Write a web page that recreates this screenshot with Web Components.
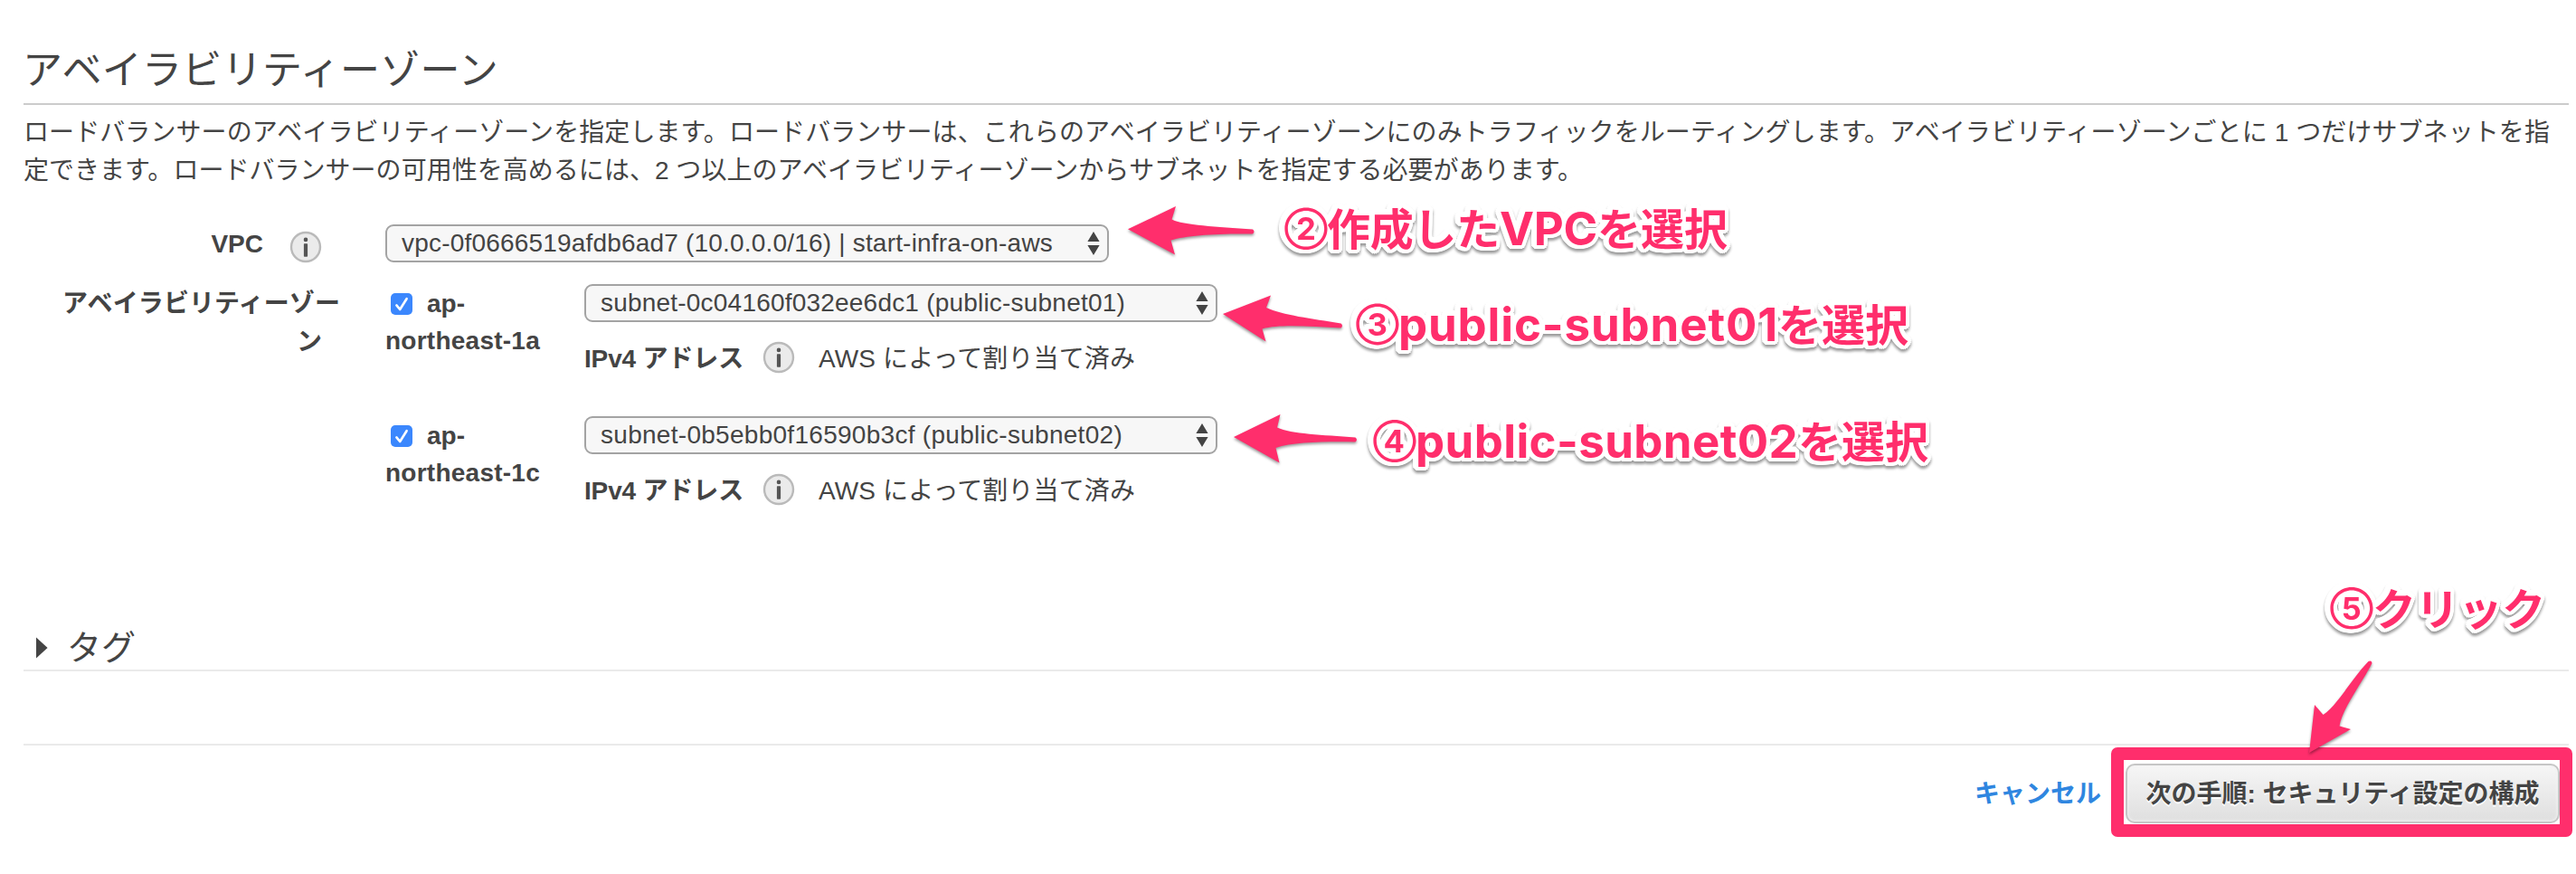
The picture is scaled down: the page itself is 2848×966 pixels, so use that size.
<!DOCTYPE html>
<html lang="ja">
<head>
<meta charset="utf-8">
<title>アベイラビリティーゾーン</title>
<style>
html,body{margin:0;padding:0;background:#fff}
body{width:2848px;height:966px;overflow:hidden;position:relative;color:#444;font:28px/42px "Liberation Sans","Noto Sans CJK JP",sans-serif}
</style>
</head>
<body>
<lb-page></lb-page>
<script>
const define=(name,html,setup)=>{
  const t=document.createElement('template');t.innerHTML=html;
  customElements.define(name,class extends HTMLElement{
    connectedCallback(){
      if(this.shadowRoot)return;
      this.attachShadow({mode:'open'}).append(t.content.cloneNode(true));
      if(setup)setup(this,this.shadowRoot);
    }
  });
};

/* single line of text whose tracking is adjusted to a given advance width */
define('fit-text',`<style>:host{display:block;white-space:nowrap}span{display:inline-block;white-space:pre}</style><span></span>`,
(el,r)=>{
  const s=r.querySelector('span');s.textContent=el.getAttribute('text');
  const w=+el.getAttribute('w');
  if(w)s.style.letterSpacing=((w-s.getBoundingClientRect().width)/[...s.textContent].length)+'px';
});

define('info-icon',`<style>:host{display:block;width:36px;height:36px}svg{display:block}</style>
<svg width="36" height="36" viewBox="0 0 36 36"><circle cx="18" cy="18" r="16" fill="#ebebeb" stroke="#bababa" stroke-width="2.4"/><circle cx="18" cy="9.9" r="2.3" fill="#555"/><rect x="15.9" y="14.3" width="4.2" height="14.4" rx=".8" fill="#555"/></svg>`);

define('check-box',`<style>:host{display:block;width:24px;height:24px}svg{display:block}</style>
<svg width="24" height="24" viewBox="0 0 24 24"><rect width="24" height="24" rx="5" fill="#3b87fd"/><path d="M6.4 13.4l3.8 4.600 7.400-11.800" fill="none" stroke="#fff" stroke-width="2.6" stroke-linecap="round" stroke-linejoin="round"/></svg>`);

define('section-title',`<style>:host{display:block;border-bottom:2px solid #ccc;padding-bottom:6px;font-size:44px;line-height:60px}fit-text{margin-left:-1px}</style><fit-text text="アベイラビリティーゾーン" w="526"></fit-text>`);

define('tag-section',`<style>:host{display:flex;border-bottom:2px solid #eaeaea;font-size:38px;line-height:53px;height:50px;padding-left:14px}svg{display:block;margin:14px 21px 0 0}</style>
<svg width="13" height="24" viewBox="0 0 13 24"><path d="M0 .5L12.6 12 0 23.5z" fill="#444"/></svg><slot></slot>`);

define('zone-row',`<style>:host{display:grid;grid-template-columns:220px 700px;height:146px}
.name{font-weight:700;line-height:42px}
.l1{display:flex;align-items:center;height:42px;padding-left:6px;gap:16px;padding-top:1px}
.l2{margin-top:-1px}
.ip{display:flex;height:36px;margin-top:21px}
.ip b{line-height:40px}
info-icon{margin:0 26px 0 21px}.t{margin-top:-1px}</style>
<div class="name"><div class="l1"><check-box></check-box><span>ap-</span></div><div class="l2"></div></div>
<div><div class="s"></div><div class="ip"><b><fit-text text="IPv4 アドレス" w="176"></fit-text></b><info-icon></info-icon><fit-text class="t" text="AWS によって割り当て済み" w="350"></fit-text></div></div>`,
(el,r)=>{
  r.querySelector('.l2').innerHTML=`<fit-text text="${el.getAttribute('zone')}" w="171"></fit-text>`;
  r.querySelector('.s').innerHTML=`<pick-list text="${el.getAttribute('subnet')}" w="${el.getAttribute('w')}"></pick-list>`;
});

define('pick-list',`<style>:host{display:flex;box-sizing:border-box;height:42px;border:2px solid #a3a3a3;border-radius:9px;background:#f7f7f7;padding:0 8px 0 16px;justify-content:space-between;align-items:center;line-height:36px}svg{display:block}.v{margin-top:-1px}</style>
<div class="v"></div><svg width="14" height="28" viewBox="0 0 14 28"><path d="M7 1l6.6 11H.4zM7 27L.4 16h13.2z" fill="#444"/></svg>`,
(el,r)=>{r.querySelector('.v').innerHTML=`<fit-text text="${el.getAttribute('text')}" w="${el.getAttribute('w')}"></fit-text>`});

define('next-button',`<style>:host{display:flex;box-sizing:border-box;width:480px;height:66px;border:2px solid #c6c6c6;border-radius:10px;background:linear-gradient(#f6f6f6,#dfdfdf);box-shadow:inset 0 0 3px 1px #f2f2f2;font-weight:700;justify-content:center;line-height:64px;text-shadow:0 2px 0 #fff}</style>
<fit-text text="次の手順: セキュリティ設定の構成" w="435"></fit-text>`);

/* pink caption with a rounded white outline and a soft shadow around the whole line */
define('callout-note',`<style>:host{position:absolute;display:block;font:700 48px/60px "Noto Sans CJK JP",sans-serif;color:#ff2e6c}
div{display:flex;filter:drop-shadow(1.5px 1.5px 0 #fff) drop-shadow(-1.5px -1.5px 0 #fff) drop-shadow(1.5px -1.5px 0 #fff) drop-shadow(-1.5px 1.5px 0 #fff) drop-shadow(2px 0 0 #fff) drop-shadow(-2px 0 0 #fff) drop-shadow(0 2px 0 #fff) drop-shadow(0 -2px 0 #fff) drop-shadow(0 3px 1.500px rgba(0,0,0,.4))}
.ja{margin-top:-3px}.en{font-family:Inter,sans-serif;font-size:51px}.num{font-family:Inter,sans-serif;font-size:34.5px;width:47px;padding-left:2px}</style><div></div>`,
(el,r)=>{
  r.querySelector('div').innerHTML=el.getAttribute('parts').split('|').map(p=>{
    const[t,w]=p.split('~');
    const c=/^[②-⑤]/.test(t)?'num':/^[a-zA-Z]/.test(t)?'en':'ja';
    return `<fit-text class="${c}" text="${t}"${w?` w="${w}"`:''}></fit-text>`;
  }).join('');
});

define('callout-layer',`<style>:host{position:absolute;inset:0;display:block}
svg{position:absolute;inset:0;filter:drop-shadow(0 2px 1.5px rgba(0,0,0,.4))}
.frame{position:absolute;left:2334px;top:826px;width:510px;height:99px;box-sizing:border-box;border:14px solid #ff2e6c;border-radius:7px}
.n2{left:1418px;top:223px}.n3{left:1497px;top:329px}.n4{left:1516px;top:458px}.n5{left:2574px;top:643px}</style>
<div class="frame"></div>
<svg width="2848" height="966" viewBox="0 0 2848 966" fill="#ff2e6c">
<path d="M1247 253.3L1300 228l-4.500 14.500C1308 249 1345 250.500 1385 253.500q3 2.500 0 5C1345 258 1312 260 1294.500 265.500L1299 281.500z"/>
<path d="M1352 347l53-20.500-5 13.500C1418 348.500 1450 352 1482.500 357.500q3 2.500 0 5C1450 361 1415 358 1395.500 363.500L1399.500 377.500z"/>
<path d="M1364 483l51.500-25-3.500 14.500C1428 480 1462 480.500 1498.500 483.500q3 2.500 0 5C1465 488 1430 488.500 1410.500 495L1414.500 511.500z"/>
<path d="M2553 832L2559 779l9.500 11C2584 780 2600 750 2618.500 731q3.500-1.500 4 2C2612 754 2589 784 2586.500 802.500L2599 806z"/>
</svg>
<callout-note class="n2" parts="②|作成した~191|VPC~108|を選択~144"></callout-note>
<callout-note class="n3" parts="③|public-subnet01~420|を選択~144"></callout-note>
<callout-note class="n4" parts="④|public-subnet02~423|を選択~144"></callout-note>
<callout-note class="n5" parts="⑤|クリック~191"></callout-note>`);

define('lb-page',`<style>:host{display:flex;flex-direction:column;box-sizing:border-box;width:2848px;height:966px;padding:48px 8px 0 26px}
.desc{margin:10px 0 38px 0;height:84px}
.form{display:grid;grid-template-columns:350px 920px;grid-template-rows:66px 146px 146px;column-gap:50px;height:442px}
.lab{font-weight:700;display:flex;justify-content:flex-end}
.vpc{padding-right:20px;gap:29px;line-height:44px}.vpc info-icon{margin-top:7px}
.az{flex-direction:column;align-items:flex-end;justify-content:flex-start;padding-top:1px}
.az .x{margin:0 20px 0 0}
.v{width:800px}
.rule{border-top:2px solid #eaeaea;margin-top:80px}
footer{display:flex;margin-top:20px;padding-right:10px;justify-content:flex-end;line-height:68px}
.cancel{color:#2f86e0;font-weight:700;margin-right:27px}</style>
<section-title></section-title>
<div class="desc"><fit-text text="ロードバランサーのアベイラビリティーゾーンを指定します。ロードバランサーは、これらのアベイラビリティーゾーンにのみトラフィックをルーティングします。アベイラビリティーゾーンごとに 1 つだけサブネットを指" w="2793"></fit-text><fit-text text="定できます。ロードバランサーの可用性を高めるには、2 つ以上のアベイラビリティーゾーンからサブネットを指定する必要があります。" w="1724"></fit-text></div>
<div class="form">
<div class="lab vpc"><span>VPC</span><info-icon></info-icon></div>
<div class="v"><pick-list text="vpc-0f0666519afdb6ad7 (10.0.0.0/16) | start-infra-on-aws" w="720"></pick-list></div>
<div class="lab az"><fit-text text="アベイラビリティーゾー" w="307"></fit-text><span class="x">ン</span></div>
<zone-row zone="northeast-1a" subnet="subnet-0c04160f032ee6dc1 (public-subnet01)" w="580"></zone-row>
<div></div>
<zone-row zone="northeast-1c" subnet="subnet-0b5ebb0f16590b3cf (public-subnet02)" w="577"></zone-row>
</div>
<tag-section>タグ</tag-section>
<div class="rule"></div>
<footer><span class="cancel">キャンセル</span><next-button></next-button></footer>
<callout-layer></callout-layer>`);
</script>
</body>
</html>
